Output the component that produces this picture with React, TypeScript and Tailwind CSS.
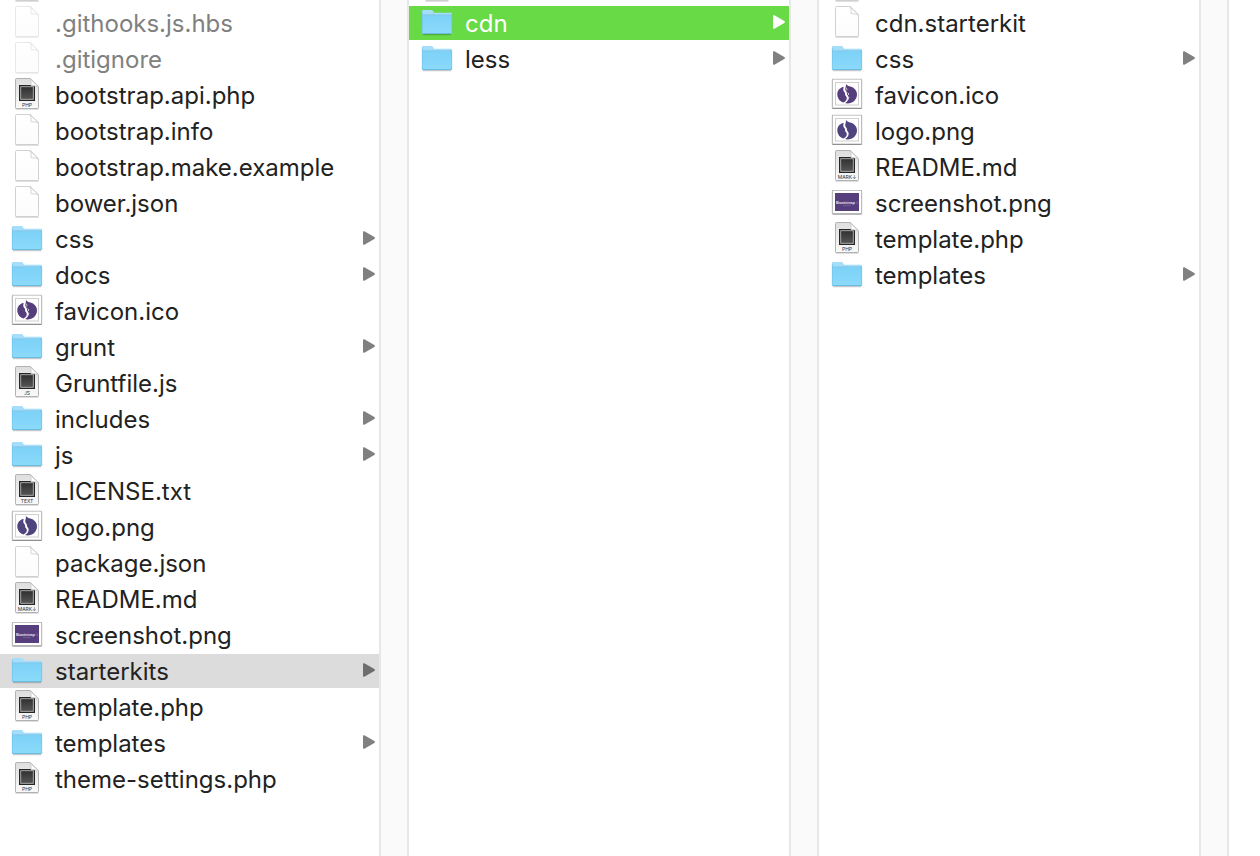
import React from 'react';

type Kind = 'folder' | 'blank' | 'code' | 'favicon' | 'logo' | 'screenshot';

interface Entry {
  name: string;
  kind: Kind;
  tag?: string;
  hidden?: boolean;
  selected?: 'active' | 'path';
}

const columns: { label: string; entries: Entry[] }[] = [
  {
    label: 'bootstrap',
    entries: [
      { name: '.githooks.js.hbs', kind: 'blank', hidden: true },
      { name: '.gitignore', kind: 'blank', hidden: true },
      { name: 'bootstrap.api.php', kind: 'code', tag: 'PHP' },
      { name: 'bootstrap.info', kind: 'blank' },
      { name: 'bootstrap.make.example', kind: 'blank' },
      { name: 'bower.json', kind: 'blank' },
      { name: 'css', kind: 'folder' },
      { name: 'docs', kind: 'folder' },
      { name: 'favicon.ico', kind: 'favicon' },
      { name: 'grunt', kind: 'folder' },
      { name: 'Gruntfile.js', kind: 'code', tag: 'JS' },
      { name: 'includes', kind: 'folder' },
      { name: 'js', kind: 'folder' },
      { name: 'LICENSE.txt', kind: 'code', tag: 'TEXT' },
      { name: 'logo.png', kind: 'logo' },
      { name: 'package.json', kind: 'blank' },
      { name: 'README.md', kind: 'code', tag: 'MARK↓' },
      { name: 'screenshot.png', kind: 'screenshot' },
      { name: 'starterkits', kind: 'folder', selected: 'path' },
      { name: 'template.php', kind: 'code', tag: 'PHP' },
      { name: 'templates', kind: 'folder' },
      { name: 'theme-settings.php', kind: 'code', tag: 'PHP' },
    ],
  },
  {
    label: 'starterkits',
    entries: [
      { name: 'cdn', kind: 'folder', selected: 'active' },
      { name: 'less', kind: 'folder' },
    ],
  },
  {
    label: 'cdn',
    entries: [
      { name: 'cdn.starterkit', kind: 'blank' },
      { name: 'css', kind: 'folder' },
      { name: 'favicon.ico', kind: 'favicon' },
      { name: 'logo.png', kind: 'logo' },
      { name: 'README.md', kind: 'code', tag: 'MARK↓' },
      { name: 'screenshot.png', kind: 'screenshot' },
      { name: 'template.php', kind: 'code', tag: 'PHP' },
      { name: 'templates', kind: 'folder' },
    ],
  },
];

const Folder = () => (
  <>
    <path d="M1 28.7h28" stroke="#000" strokeOpacity=".25" />
    <path d="M0 5.2Q0 4 1.2 4h8.3q1 0 1.5 1l1 1.7h16.8Q30 6.7 30 8v19.8H0z" fill="#a5defa" />
    <path d="M0 9.4h30v17.4q0 1.2-1.2 1.2H1.2Q0 28 0 26.8z" fill="url(#folderFace)" />
    <path d="M0 9h30" stroke="#65b9df" strokeWidth=".7" />
    <path d="M.5 27.6h29" stroke="#5db0d6" strokeWidth=".8" />
    <path d="M.3 5.5v22M29.7 8.5v19" stroke="#6dc0e4" strokeWidth=".6" />
  </>
);

const Page = ({ tag }: { tag?: string }) => (
  <>
    <path d="M3.5 31h23" stroke="#000" strokeOpacity=".25" />
    <path
      d="M4.5.5h13.8l8.2 8.2v20.6q0 1.2-1.2 1.2H4.5q-1 0-1-1v-28q0-1 1-1z"
      fill={tag ? 'url(#codePage)' : 'url(#blankPage)'}
      stroke={tag ? '#a2a2a2' : '#c6c6c6'}
      strokeWidth=".8"
    />
    {tag && (
      <>
        <rect x="7" y="7" width="16" height="16" fill="#262626" />
        <rect x="8.7" y="8.7" width="12.6" height="12.6" fill="url(#chip)" stroke="#b4b4b4" strokeWidth=".9" />
        <text x="15" y="28.6" textAnchor="middle" fontSize="5" fill="#333">
          {tag}
        </text>
      </>
    )}
    <path d="M18 .7q1.700 2.500 1 7 4.300-.3 7.500 1.300z" fill="#fff" stroke="#c4c4c4" strokeWidth=".7" />
  </>
);

const Frame = ({ y, height }: { y: number; height: number }) => (
  <>
    <rect x="-.3" y={y + 0.6} width="30.6" height={height} fill="#000" fillOpacity=".18" />
    <rect x=".5" y={y + 1} width="29" height={height} fill="#777" />
    <rect x=".4" y={y} width="29.2" height={height} fill="#fff" stroke="#b5b5b5" strokeWidth=".8" />
  </>
);

const Logo = ({ rough }: { rough?: boolean }) => (
  <>
    <Frame y={1.2} height={28.8} />
    <rect x="3.5" y="4.5" width="23" height="22.5" fill="#fff" stroke="#cfcfcf" />
    {/* Left lobe, then the body with its stem */}
    <path
      d="M11.5 8.700C7.500 9.800 5.300 12.700 5.300 16.300c0 4 2.500 7 6 8.300 2.700-1.200 4.200-3.500 3.200-5.600-.4-1-1.600-1.400-1.400-2.900.3-1.800-1.600-2.300-1.800-4.100-.2-1.200.4-2 .2-3.300z"
      fill={rough ? '#563d7c' : '#50447f'}
    />
    <path
      d="M13.800 5.500c.6 1.700 1.800 2.300 4.500 2.900 4 1 6.700 4 6.700 8 0 5-4.200 9-9.500 9-1 0-1.800-.1-2.600-.3 3-1.600 4.500-4.300 3.400-6.800-.5-1.100-1.500-1.300-1.300-2.700.2-1.900-1.700-2.600-1.800-4.200-.1-2 1.300-3.300.6-5.900z"
      fill={rough ? '#563d7c' : '#50447f'}
    />
    {rough && (
      <path d="M14 9.500l1 2-1.500 1.500M15.500 14.500l1.500 1.500-1.500 1.500M17 19l-1 2.500-2 .5" fill="none" stroke="#d9d2e4" strokeWidth=".9" />
    )}
  </>
);

const Screenshot = () => (
  <>
    <Frame y={4.5} height={23} />
    <rect x="3" y="7" width="24" height="18" fill="#573e7d" />
    <text x="4" y="17.5" fontSize="4" fontWeight="700" fill="#e6e0ee" className="font-['Liberation_Sans',sans-serif]">
      Bootstrap
    </text>
    <text x="23.800" y="17.5" fontSize="4" fill="#8d7ba8">
      3
    </text>
    <path d="M11 19.5h8" stroke="#7a669a" strokeWidth=".7" />
  </>
);

const FileIcon = ({ kind, tag }: { kind: Kind; tag?: string }) => (
  <svg width="30" height="34" viewBox="0 0 30 34" className="shrink-0 overflow-visible" aria-hidden="true">
    {kind === 'folder' && <Folder />}
    {kind === 'blank' && <Page />}
    {kind === 'code' && <Page tag={tag} />}
    {kind === 'favicon' && <Logo rough />}
    {kind === 'logo' && <Logo />}
    {kind === 'screenshot' && <Screenshot />}
  </svg>
);

const Arrow = ({ className }: { className: string }) => (
  <svg width="12" height="14" viewBox="0 0 12 14" className={`mb-0.5 ml-auto shrink-0 fill-current ${className}`} aria-hidden="true">
    <path d="M0 1.2Q0-.3 1.4.3L11.3 6q1.3 1 0 2L1.4 13.7Q0 14.3 0 12.8z" />
  </svg>
);

const Row = ({ entry }: { entry: Entry }) => {
  const active = entry.selected === 'active';
  const path = entry.selected === 'path';

  return (
    <li>
      <button
        type="button"
        className={`flex h-[34px] w-full items-center gap-[13px] pl-[13px] pr-1 text-left ${
          active ? 'bg-[#68da45] text-white' : path ? 'bg-[#dcdcdc] text-[#222222]' : 'text-[#222222]'
        }`}
      >
        <span className={`flex ${entry.hidden ? 'opacity-50' : ''}`}>
          <FileIcon kind={entry.kind} tag={entry.tag} />
        </span>
        <span className={`whitespace-nowrap pt-0.5 text-2xl leading-8 ${entry.hidden ? 'text-[#808080]' : ''}`}>
          {entry.name}
        </span>
        {entry.kind === 'folder' && (
          <Arrow className={active ? 'text-white' : path ? 'text-[#6e6e6e]' : 'text-[#808080]'} />
        )}
      </button>
    </li>
  );
};

const Column = ({ label, entries }: { label: string; entries: Entry[] }) => (
  <>
    <section aria-label={label} className="min-w-0 flex-1 overflow-hidden">
      {/* Tail of the row scrolled out above */}
      <div className="-mt-[30px] mb-0.5 flex h-[34px] pl-[13px]">
        <FileIcon kind="blank" />
      </div>
      <ul className="flex flex-col gap-0.5">
        {entries.map((entry) => (
          <Row key={entry.name} entry={entry} />
        ))}
      </ul>
    </section>
    <div className="w-[30px] shrink-0 border-x-2 border-[#e7e7e7] bg-[#fafafa]" />
  </>
);

const App = () => (
  <div className="min-h-screen overflow-hidden bg-white font-['Inter','Liberation_Sans',sans-serif]">
    {/* Shared gradients for the file icons */}
    <svg className="absolute h-0 w-0" aria-hidden="true">
      <defs>
        <linearGradient id="folderFace" x1="0" y1="0" x2="0" y2="1">
          <stop offset="0" stopColor="#7dd2f8" />
          <stop offset="1" stopColor="#8bdafa" />
        </linearGradient>
        <linearGradient id="blankPage" x1="0" y1="0" x2="0" y2="1">
          <stop offset="0" stopColor="#fff" />
          <stop offset="1" stopColor="#fcfcfc" />
        </linearGradient>
        <linearGradient id="codePage" x1="0" y1="0" x2="0" y2="1">
          <stop offset="0" stopColor="#dedede" />
          <stop offset="1" stopColor="#fafafa" />
        </linearGradient>
        <linearGradient id="chip" x1="0" y1="0" x2="0" y2="1">
          <stop offset="0" stopColor="#303030" />
          <stop offset="1" stopColor="#555" />
        </linearGradient>
      </defs>
    </svg>
    <main className="-ml-px flex min-h-screen">
      {columns.map((column) => (
        <Column key={column.label} label={column.label} entries={column.entries} />
      ))}
      <div className="w-[31px] shrink-0" />
    </main>
  </div>
);

export default App;
